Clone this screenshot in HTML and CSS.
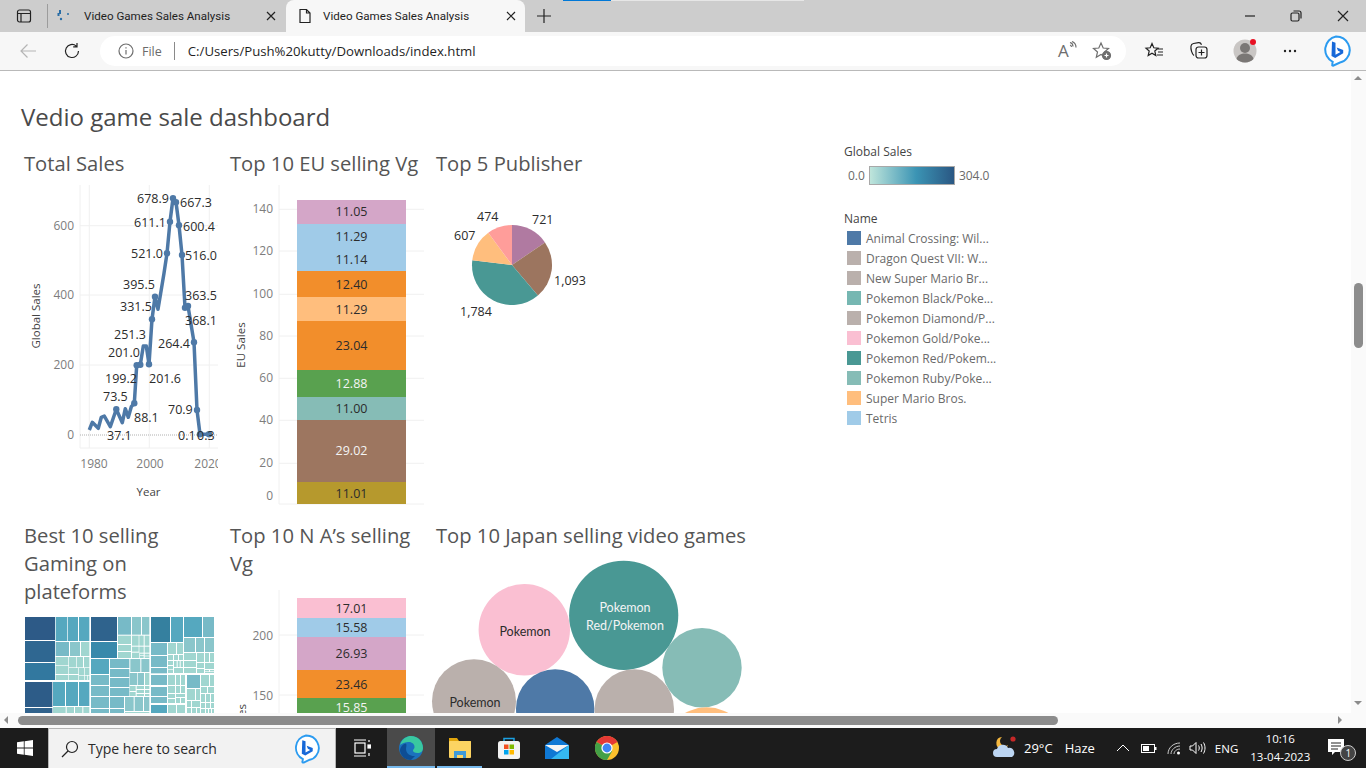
FILE: index.html
```html
<!DOCTYPE html>
<html lang="en">
<head>
    <meta charset="UTF-8">
    <title>Video Games Sales Analysis</title>
    <link rel="stylesheet" href="styles.css">
</head>
<body>
    <div class="tabbar">
        <div class="top-strip"></div>
        <div class="tab-actions">
            <svg width="16" height="16" viewBox="0 0 16 16" class="dark-line"><rect x="1.5" y="2" width="13" height="12" rx="2"/><path d="M1.5 5.5h13M5 5.5V14" /></svg>
        </div>
        <div class="tab">
            <svg width="16" height="16" viewBox="0 0 16 16"><g fill="#2a6ea6"><rect x="3" y="2" width="2" height="4"/><rect x="1.5" y="5" width="2" height="3"/><circle cx="5" cy="11" r="1.2"/><circle cx="12" cy="6" r="1"/></g></svg>
            <span class="tab-title">Video Games Sales Analysis</span>
            <svg width="10" height="10" viewBox="0 0 10 10" class="dark-line"><path d="M1 1l8 8M9 1l-8 8"/></svg>
        </div>
        <div class="tab active">
            <svg width="16" height="16" viewBox="0 0 16 16" class="dark-line"><path d="M3 1.5h6.5l3.5 3.5v9.5H3zM9.5 1.5V5H13"/></svg>
            <span class="tab-title">Video Games Sales Analysis</span>
            <svg width="10" height="10" viewBox="0 0 10 10" class="dark-line"><path d="M1 1l8 8M9 1l-8 8"/></svg>
        </div>
        <div class="new-tab">
            <svg width="16" height="16" viewBox="0 0 16 16" class="dark-line"><path d="M8 1v14M1 8h14"/></svg>
        </div>
        <div class="window-btns">
            <div class="win-btn"><svg width="12" height="12" viewBox="0 0 12 12" class="dark-line"><path d="M1 6h10"/></svg></div>
            <div class="win-btn"><svg width="12" height="12" viewBox="0 0 12 12" class="dark-line"><rect x="1" y="3" width="8" height="8" rx="1.5"/><path d="M3.5 1h5.5a2 2 0 0 1 2 2v5.5"/></svg></div>
            <div class="win-btn"><svg width="12" height="12" viewBox="0 0 12 12" class="dark-line"><path d="M1 1l10 10M11 1L1 11"/></svg></div>
        </div>
    </div>

    <div class="toolbar">
        <div class="nav-btn"><svg width="18" height="18" viewBox="0 0 18 18" class="faint-line"><path d="M17 9H2M8.5 2.5L2 9l6.5 6.5"/></svg></div>
        <div class="nav-btn"><svg width="18" height="18" viewBox="0 0 18 18" class="dark-line"><path d="M15.5 9a6.500 6.500 0 1 1-2.200-4.900M14 1v3.800h-3.800"/></svg></div>
        <div class="address">
            <svg width="16" height="16" viewBox="0 0 16 16" class="gray-line"><circle cx="8" cy="8" r="7"/><path d="M8 7v4.5M8 4.200v1.300"/></svg>
            <span class="file-label">File</span>
            <span class="addr-sep"></span>
            <span class="url">C:/Users/Push%20kutty/Downloads/index.html</span>
            <span class="read-aloud">A<svg width="8" height="10" viewBox="0 0 8 10" class="gray-line"><path d="M1 1.500c2 .5 3 2 3 4M1 4c1 .3 1.500 1 1.500 2M3 .5c2.500 1 4 3 4 6"/></svg></span>
            <svg width="20" height="20" viewBox="0 0 20 20" class="gray-line"><path d="M9 2l2.200 5 5.300.5-4 3.500 1.200 5.300L9 13.500l-4.700 2.800L5.500 11l-4-3.500L6.800 7z"/><circle cx="14.500" cy="14.500" r="4" fill="#6e6e6e"/><path d="M14.500 12.500v4M12.500 14.500h4" stroke="#fff"/></svg>
        </div>
        <div class="action-btn"><svg width="20" height="20" viewBox="0 0 20 20" class="dark-line"><path d="M8 2.500l1.800 4.300 4.200.4-3.200 2.800 1 4.500L8 12.200 4.200 14.500l1-4.500L2 7.200l4.200-.4zM14 8h5M14 11h5M13 14h6"/></svg></div>
        <div class="action-btn"><svg width="20" height="20" viewBox="0 0 20 20" class="dark-line"><path d="M5 14.500C3 13 1.500 8 2 5c.2-1.500 1-2.200 2.500-2.500l5-.8c1.500-.2 2.500.5 3 2"/><rect x="7" y="6" width="11" height="11" rx="2.500"/><path d="M12.500 8.500v6M9.500 11.500h6"/></svg></div>
        <div class="action-btn">
            <svg width="24" height="24" viewBox="0 0 24 24"><circle cx="12" cy="12" r="11.500" fill="#c9c6c4"/><circle cx="12" cy="9" r="5" fill="#7a7775"/><path d="M3.500 20c1-4 4.500-5.500 8.500-5.500s7.500 1.500 8.500 5.500c-4 4.500-13 4.500-17 0z" fill="#7a7775"/><circle cx="20" cy="3" r="3" fill="#e81123"/></svg>
        </div>
        <div class="action-btn">
            <svg width="14" height="4" viewBox="0 0 14 4" fill="#222"><circle cx="2" cy="2" r="1.2"/><circle cx="7" cy="2" r="1.2"/><circle cx="12" cy="2" r="1.2"/></svg>
        </div>
        <div class="action-btn">
            <svg width="30" height="32" viewBox="0 0 30 32"><path d="M15 1.500a13.500 13.500 0 0 1 11 21.500c-1.500 2.300-4 4-7 4.500l-6.500 3c-1 .4-1.500-.2-1.300-1l.5-2.700A13.500 13.500 0 0 1 15 1.500z" fill="#fff" stroke="#2b9bf0" stroke-width="2"/><path d="M11 6.500l3.500 1.300v12l5-2.800-2.500-1.200-1.300-3.200 6.500 2.400v3.300l-8 4.700-3.700-2z" fill="#1768d8"/></svg>
        </div>
    </div>

    <div class="browser-body">
        <main class="page">
            <h1>Vedio game sale dashboard</h1>
            <div class="dash">
                <section class="tile">
                    <h2>Total Sales</h2>
                    <svg class="chart" width="194" height="325" viewBox="24 180 194 325">
                        <g class="grid">
                            <path d="M80 225.700H218M80 295H218M80 365H218M80 448H218M80 185V448M89.300 185V448M149.300 185V448M209.300 185V448"/>
                        </g>
                        <path d="M80 435H218" class="zero-line"/>
                        <g class="tick" text-anchor="end">
                            <text x="74" y="230">600</text>
                            <text x="74" y="299">400</text>
                            <text x="74" y="369">200</text>
                            <text x="74" y="439">0</text>
                        </g>
                        <g class="tick" text-anchor="middle">
                            <text x="94" y="468">1980</text>
                            <text x="150" y="468">2000</text>
                            <text x="208" y="468">2020</text>
                        </g>
                        <text x="148.500" y="496" class="axis-title" text-anchor="middle">Year</text>
                        <text transform="translate(40 316) rotate(-90)" class="axis-title" text-anchor="middle">Global Sales</text>
                        <polyline class="sales-line" points="89.300,430 92.300,422.300 98.300,428.300 101.300,417.300 104.300,416 110.300,426.700 116.300,409.300 122.300,422.700 125.300,408.700 128.300,417.300 131.300,406.700 134.300,403.300 136.700,365.300 140.300,364.700 143.300,346 146.300,346 149,364.300 152,319.300 155,296.700 158,309.300 164,273.300 167,253.300 170,221.700 173,198.300 176,202.300 179,225.300 182,255 185,307.700 188,306 194,342.300 197,410 200,434.300 209,434.300"/>
                        <g class="sales-dots">
                            <circle cx="116.300" cy="409.300" r="3.200"/><circle cx="134.300" cy="403.300" r="3.200"/><circle cx="136.700" cy="365.300" r="3.200"/><circle cx="140.300" cy="364.700" r="3.200"/><circle cx="149" cy="364.300" r="3.200"/><circle cx="152" cy="319.300" r="3.200"/><circle cx="155" cy="296.700" r="3.200"/><circle cx="167" cy="253.300" r="3.200"/><circle cx="170" cy="221.700" r="3.200"/><circle cx="173" cy="198.300" r="3.200"/><circle cx="176" cy="202.300" r="3.200"/><circle cx="179" cy="225.300" r="3.200"/><circle cx="182" cy="255" r="3.200"/><circle cx="185" cy="307.700" r="3.200"/><circle cx="188" cy="306" r="3.200"/><circle cx="194" cy="342.300" r="3.200"/><circle cx="197" cy="410" r="3.200"/><circle cx="200" cy="434.300" r="3.200"/><circle cx="209" cy="434.300" r="3.200"/>
                        </g>
                        <g class="mark">
                            <text x="137" y="203">678.9</text><text x="180" y="207">667.3</text>
                            <text x="134" y="227">611.1</text><text x="183" y="231">600.4</text>
                            <text x="131" y="258">521.0</text><text x="185" y="260">516.0</text>
                            <text x="123" y="289">395.5</text><text x="185" y="300">363.5</text>
                            <text x="120" y="311">331.5</text><text x="185" y="325">368.1</text>
                            <text x="114" y="339">251.3</text><text x="158" y="348">264.4</text>
                            <text x="108" y="357">201.0</text><text x="105" y="383">199.2</text>
                            <text x="149" y="383">201.6</text><text x="103" y="401">73.5</text>
                            <text x="168" y="414">70.9</text><text x="134" y="422">88.1</text>
                            <text x="107" y="440">37.1</text><text x="178" y="440">0.1</text><text x="197" y="440">0.3</text>
                        </g>
                    </svg>
                </section>

                <section class="tile">
                    <h2>Top 10 EU selling Vg</h2>
                    <svg class="chart" width="194" height="325" viewBox="230 180 194 325">
                        <g class="grid"><path d="M279 209.300H424M279 251H424M279 294.300H424M279 336H424M279 378.300H424M279 420.300H424M279 463.300H424M279 504H424M279 185V504"/></g>
                        <g class="tick" text-anchor="end">
                            <text x="273" y="213">140</text><text x="273" y="255">120</text><text x="273" y="298">100</text><text x="273" y="340">80</text>
                            <text x="273" y="382">60</text><text x="273" y="424">40</text><text x="273" y="467">20</text><text x="273" y="500">0</text>
                        </g>
                        <text transform="translate(245 345) rotate(-90)" class="axis-title" text-anchor="middle">EU Sales</text>
                        <rect x="297" y="200" width="109" height="24" fill="#d4a6c8"/>
                        <rect x="297" y="224" width="109" height="47" fill="#a0cbe8"/>
                        <rect x="297" y="271" width="109" height="26" fill="#f28e2b"/>
                        <rect x="297" y="297" width="109" height="24" fill="#ffbe7d"/>
                        <rect x="297" y="321" width="109" height="49" fill="#f28e2b"/>
                        <rect x="297" y="370" width="109" height="27" fill="#59a14f"/>
                        <rect x="297" y="397" width="109" height="23" fill="#86bcb6"/>
                        <rect x="297" y="420" width="109" height="62" fill="#9d7660"/>
                        <rect x="297" y="482" width="109" height="22" fill="#b6992d"/>
                        <g class="mark" text-anchor="middle">
                            <text x="351.500" y="216">11.05</text><text x="351.500" y="241">11.29</text><text x="351.500" y="264">11.14</text>
                            <text x="351.500" y="289">12.40</text><text x="351.500" y="314">11.29</text><text x="351.500" y="350">23.04</text>
                            <text x="351.500" y="388" class="on-dark">12.88</text><text x="351.500" y="413">11.00</text>
                            <text x="351.500" y="455" class="on-dark">29.02</text><text x="351.500" y="498">11.01</text>
                        </g>
                    </svg>
                </section>

                <section class="tile">
                    <h2>Top 5 Publisher</h2>
                    <svg class="chart" width="180" height="150" viewBox="436 180 180 150">
                        <path d="M512 265V225A40 40 0 0 1 545 242.400Z" fill="#b07aa1"/>
                        <path d="M512 265L545 242.400A40 40 0 0 1 537.900 295.500Z" fill="#9c755f"/>
                        <path d="M512 265L537.900 295.500A40 40 0 0 1 472.300 260.200Z" fill="#499894"/>
                        <path d="M512 265L472.300 260.200A40 40 0 0 1 488.300 232.800Z" fill="#ffbe7d"/>
                        <path d="M512 265L488.300 232.800A40 40 0 0 1 512 225Z" fill="#ff9d9a"/>
                        <g class="mark">
                            <text x="532" y="224">721</text><text x="477" y="221">474</text><text x="454" y="240">607</text>
                            <text x="554" y="285">1,093</text><text x="460" y="316">1,784</text>
                        </g>
                    </svg>
                </section>

                <aside class="legends">
                    <div class="legend-title">Global Sales</div>
                    <div class="ramp"><span>0.0</span><i class="ramp-bar"></i><span>304.0</span></div>
                    <div class="legend-title name-title">Name</div>
                    <ul class="legend-list">
                        <li><i class="c-blue"></i>Animal Crossing: Wil...</li>
                        <li><i class="c-gray"></i>Dragon Quest VII: W...</li>
                        <li><i class="c-gray"></i>New Super Mario Br...</li>
                        <li><i class="c-aqua"></i>Pokemon Black/Poke...</li>
                        <li><i class="c-gray"></i>Pokemon Diamond/P...</li>
                        <li><i class="c-pink"></i>Pokemon Gold/Poke...</li>
                        <li><i class="c-teal"></i>Pokemon Red/Pokem...</li>
                        <li><i class="c-sage"></i>Pokemon Ruby/Poke...</li>
                        <li><i class="c-peach"></i>Super Mario Bros.</li>
                        <li><i class="c-sky"></i>Tetris</li>
                    </ul>
                </aside>

                <section class="tile">
                    <h2>Best 10 selling Gaming on plateforms</h2>
                    <svg class="chart tree" width="189" height="97" viewBox="15 21 567 291">
                        <rect x="15" y="21" width="90" height="69" fill="#2d5a87"/><rect x="15" y="93" width="90" height="63" fill="#2f6791"/><rect x="15" y="159" width="90" height="51" fill="#32789f"/>
                        <rect x="15" y="216" width="82" height="75" fill="#2d5c88"/><rect x="15" y="294" width="82" height="20" fill="#30628c"/>
                        <rect x="213" y="21" width="78" height="72" fill="#2f638d"/><rect x="213" y="96" width="78" height="48" fill="#3889ab"/>
                        <rect x="393" y="21" width="57" height="75" fill="#35809f"/>
                        <g fill="#55a8bf">
                            <rect x="107" y="21" width="34" height="72"/><rect x="143" y="21" width="31" height="72"/><rect x="177" y="21" width="31" height="72"/>
                            <rect x="99" y="216" width="36" height="72"/><rect x="138" y="216" width="36" height="72"/><rect x="177" y="216" width="31" height="72"/>
                            <rect x="453" y="21" width="36" height="75"/><rect x="492" y="21" width="54" height="60"/><rect x="393" y="285" width="48" height="26"/><rect x="213" y="147" width="54" height="45"/>
                        </g>
                        <g fill="#77bac7">
                            <rect x="107" y="96" width="40" height="42"/><rect x="294" y="21" width="39" height="53"/><rect x="549" y="21" width="33" height="60"/>
                            <rect x="270" y="147" width="58" height="27"/><rect x="270" y="177" width="58" height="24"/><rect x="270" y="204" width="58" height="27"/><rect x="270" y="234" width="58" height="24"/>
                            <rect x="213" y="195" width="54" height="30"/><rect x="213" y="228" width="54" height="30"/><rect x="213" y="261" width="54" height="33"/><rect x="213" y="297" width="54" height="17"/>
                            <rect x="270" y="261" width="42" height="33"/><rect x="270" y="297" width="42" height="17"/>
                            <rect x="393" y="99" width="48" height="36"/><rect x="393" y="138" width="48" height="33"/><rect x="393" y="174" width="48" height="16"/>
                            <rect x="393" y="195" width="48" height="30"/><rect x="393" y="231" width="48" height="27"/><rect x="393" y="261" width="48" height="18"/><rect x="501" y="195" width="39" height="39"/>
                        </g>
                        <g fill="#8ac6cb">
                            <rect x="150" y="96" width="30" height="42"/><rect x="336" y="21" width="27" height="53"/><rect x="366" y="21" width="22" height="53"/><rect x="331" y="147" width="30" height="39"/>
                            <rect x="364" y="147" width="24" height="39"/><rect x="492" y="84" width="33" height="42"/><rect x="528" y="84" width="24" height="42"/><rect x="555" y="84" width="27" height="42"/>
                            <rect x="315" y="261" width="26" height="42"/><rect x="344" y="261" width="25" height="42"/><rect x="372" y="261" width="16" height="42"/><rect x="329" y="189" width="22" height="36"/><rect x="353" y="189" width="19" height="36"/>
                        </g>
                        <g fill="#a0d6d0">
                            <rect x="183" y="96" width="25" height="42"/><rect x="107" y="141" width="38" height="25"/><rect x="147" y="141" width="21" height="31"/><rect x="170" y="141" width="19" height="31"/><rect x="192" y="141" width="16" height="31"/>
                            <rect x="107" y="168" width="38" height="24"/><rect x="147" y="174" width="28" height="18"/><rect x="177" y="174" width="15" height="21"/><rect x="194" y="174" width="14" height="21"/>
                            <rect x="107" y="195" width="38" height="15"/><rect x="147" y="195" width="28" height="15"/><rect x="177" y="197" width="15" height="13"/><rect x="194" y="197" width="8" height="13"/><rect x="204" y="197" width="4" height="13"/>
                            <rect x="99" y="291" width="38" height="20"/><rect x="140" y="291" width="22" height="20"/><rect x="165" y="291" width="22" height="20"/><rect x="190" y="291" width="18" height="20"/>
                            <rect x="294" y="77" width="39" height="25"/><rect x="294" y="105" width="39" height="18"/><rect x="294" y="126" width="39" height="18"/><rect x="336" y="77" width="20" height="30"/><rect x="358" y="77" width="13" height="30"/><rect x="374" y="77" width="14" height="30"/>
                            <rect x="336" y="110" width="20" height="15"/><rect x="358" y="110" width="13" height="18"/><rect x="374" y="110" width="14" height="18"/><rect x="336" y="128" width="22" height="16"/><rect x="360" y="131" width="11" height="5"/><rect x="360" y="138" width="11" height="6"/><rect x="374" y="131" width="14" height="6"/><rect x="374" y="139" width="14" height="5"/>
                            <rect x="375" y="189" width="13" height="36"/><rect x="329" y="228" width="18" height="15"/><rect x="350" y="228" width="22" height="9"/><rect x="350" y="240" width="22" height="9"/><rect x="375" y="228" width="13" height="9"/><rect x="375" y="240" width="13" height="9"/><rect x="329" y="246" width="18" height="12"/><rect x="350" y="252" width="22" height="6"/><rect x="375" y="252" width="13" height="6"/><rect x="315" y="306" width="73" height="8"/>
                            <rect x="444" y="99" width="24" height="33"/><rect x="471" y="99" width="18" height="33"/><rect x="444" y="135" width="15" height="15"/><rect x="462" y="135" width="12" height="15"/><rect x="477" y="135" width="12" height="15"/>
                            <rect x="444" y="153" width="15" height="12"/><rect x="462" y="153" width="8" height="18"/><rect x="473" y="153" width="6" height="18"/><rect x="482" y="153" width="7" height="18"/><rect x="444" y="168" width="15" height="10"/><rect x="444" y="180" width="15" height="9"/><rect x="462" y="174" width="27" height="15"/>
                            <rect x="492" y="129" width="36" height="21"/><rect x="492" y="153" width="36" height="18"/><rect x="492" y="174" width="36" height="15"/><rect x="531" y="129" width="21" height="27"/><rect x="555" y="129" width="12" height="27"/><rect x="570" y="129" width="12" height="27"/>
                            <rect x="531" y="159" width="21" height="15"/><rect x="531" y="177" width="21" height="12"/><rect x="555" y="159" width="27" height="18"/><rect x="555" y="180" width="12" height="4"/><rect x="570" y="180" width="12" height="4"/><rect x="555" y="186" width="27" height="3"/>
                            <rect x="444" y="285" width="24" height="26"/><rect x="471" y="285" width="24" height="26"/><rect x="444" y="195" width="21" height="30"/><rect x="468" y="195" width="12" height="30"/><rect x="483" y="195" width="12" height="30"/>
                            <rect x="444" y="228" width="21" height="21"/><rect x="468" y="228" width="12" height="21"/><rect x="483" y="228" width="12" height="21"/><rect x="444" y="252" width="21" height="12"/><rect x="444" y="267" width="21" height="12"/><rect x="468" y="252" width="27" height="9"/><rect x="468" y="264" width="12" height="15"/><rect x="483" y="264" width="12" height="15"/>
                            <rect x="543" y="195" width="24" height="33"/><rect x="570" y="195" width="12" height="33"/><rect x="501" y="237" width="24" height="33"/><rect x="528" y="237" width="12" height="33"/><rect x="543" y="231" width="18" height="18"/><rect x="564" y="231" width="18" height="18"/>
                            <rect x="543" y="252" width="12" height="24"/><rect x="558" y="252" width="12" height="24"/><rect x="573" y="252" width="9" height="24"/><rect x="501" y="273" width="12" height="18"/><rect x="516" y="273" width="24" height="18"/><rect x="501" y="294" width="12" height="17"/><rect x="516" y="294" width="12" height="17"/><rect x="531" y="294" width="9" height="17"/>
                            <rect x="543" y="279" width="12" height="15"/><rect x="558" y="279" width="12" height="15"/><rect x="573" y="279" width="9" height="15"/><rect x="543" y="297" width="12" height="14"/><rect x="558" y="297" width="6" height="14"/><rect x="567" y="297" width="6" height="14"/><rect x="576" y="297" width="6" height="14"/>
                        </g>
                    </svg>
                </section>

                <section class="tile">
                    <h2>Top 10 N A&rsquo;s selling Vg</h2>
                    <svg class="chart na" width="194" height="140" viewBox="230 585 194 140">
                        <g class="grid"><path d="M279 635H424M279 695H424M279 590V725"/></g>
                        <g class="tick" text-anchor="end"><text x="273" y="640">200</text><text x="273" y="700">150</text></g>
                        <text transform="translate(246 704) rotate(-90)" class="axis-title" text-anchor="end">NA Sales</text>
                        <rect x="297" y="598" width="109" height="20" fill="#fabfd2"/>
                        <rect x="297" y="618" width="109" height="19" fill="#a0cbe8"/>
                        <rect x="297" y="637" width="109" height="33" fill="#d4a6c8"/>
                        <rect x="297" y="670" width="109" height="28" fill="#f28e2b"/>
                        <rect x="297" y="698" width="109" height="27" fill="#59a14f"/>
                        <g class="mark" text-anchor="middle">
                            <text x="351.500" y="613">17.01</text><text x="351.500" y="632">15.58</text><text x="351.500" y="658">26.93</text>
                            <text x="351.500" y="689">23.46</text><text x="351.500" y="712" class="on-dark">15.85</text>
                        </g>
                    </svg>
                </section>

                <section class="tile wide">
                    <h2>Top 10 Japan selling video games</h2>
                    <svg class="chart bubbles" width="330" height="170" viewBox="430 555 330 170">
                        <circle cx="702" cy="667.700" r="39.700" fill="#86bcb6"/>
                        <circle cx="706.700" cy="751.300" r="44" fill="#ffbe7d"/>
                        <circle cx="524.300" cy="629.700" r="45.700" fill="#fabfd2"/>
                        <circle cx="623.700" cy="615.300" r="54.600" fill="#499894"/>
                        <circle cx="474" cy="701.300" r="42" fill="#bab0ac"/>
                        <circle cx="555.200" cy="708.500" r="39.200" fill="#4e79a7"/>
                        <circle cx="634.300" cy="709" r="39.700" fill="#bab0ac"/>
                        <g class="mark bubble-text" text-anchor="middle">
                            <text x="525" y="636">Pokemon</text>
                            <text x="625" y="612" class="on-dark">Pokemon</text>
                            <text x="625" y="630" class="on-dark">Red/Pokemon</text>
                            <text x="475" y="707">Pokemon</text>
                        </g>
                    </svg>
                </section>
            </div>
        </main>
        <div class="vscroll">
            <i class="arrow up"></i>
            <i class="vthumb"></i>
            <i class="arrow down"></i>
        </div>
        <div class="hscroll">
            <i class="arrow left"></i>
            <i class="hthumb"></i>
            <i class="arrow right"></i>
        </div>
    </div>

    <div class="taskbar">
        <div class="start">
            <svg width="16" height="16" viewBox="0 0 16 16" fill="#fff"><path d="M0 2.300l6.800-1v6.300H0zM7.600 1.200L16 0v7.600H7.600zM0 8.400h6.800v6.300L0 13.700zM7.600 8.400H16V16l-8.400-1.200z"/></svg>
        </div>
        <div class="search">
            <svg width="18" height="18" viewBox="0 0 18 18" class="dark-line"><circle cx="11" cy="7" r="5.500"/><path d="M7 11l-6 6"/></svg>
            <span class="search-text">Type here to search</span>
            <svg width="28" height="30" viewBox="0 0 30 32"><path d="M15 1.500a13.500 13.500 0 0 1 11 21.500c-1.500 2.300-4 4-7 4.500l-6.500 3c-1 .4-1.500-.2-1.300-1l.5-2.700A13.500 13.500 0 0 1 15 1.500z" fill="#fff" stroke="#2b9bf0" stroke-width="2"/><path d="M11 6.500l3.500 1.300v12l5-2.800-2.500-1.200-1.300-3.200 6.500 2.400v3.300l-8 4.700-3.700-2z" fill="#1768d8"/></svg>
        </div>
        <div class="task taskview">
            <svg width="18" height="18" viewBox="0 0 18 18" class="white-line"><rect x="2" y="4" width="10" height="10"/><path d="M1 1h12M1 17h12"/><rect x="15" y="6" width="2.500" height="3" fill="#fff"/><path d="M16 1v2M16 14v3"/></svg>
        </div>
        <div class="task edge running">
            <svg width="24" height="24" viewBox="0 0 24 24"><circle cx="12" cy="12" r="12" fill="#1b72bd"/><path d="M1 9C3 2.500 8 0 12 0c7 0 12 5.500 12 12 0 3-2 5-5.500 5-3 0-4.500-1.200-4.500-2.500 0-1 1.200-1.500 1.500-3C16 8 12.500 5.500 9 6 5 6.500 2 8 1 9z" fill="#39c8a0"/><path d="M7 13c0 5 5 7.500 9 7l-4 4C6 24 2 20 1 15c0-4 3-7 6-7.500C8 9 7 11 7 13z" fill="#0d4d94"/></svg>
        </div>
        <div class="task explorer running">
            <svg width="24" height="22" viewBox="0 0 24 22"><path d="M1 1h8l2 3h12v5H1z" fill="#e2a60d"/><rect x="1" y="4" width="22" height="17" rx="1" fill="#fcd462"/><path d="M6 21v-7h12v7h-3v-3H9v3z" fill="#3f9ad8"/></svg>
        </div>
        <div class="task store">
            <svg width="24" height="24" viewBox="0 0 24 24"><path d="M7 6V2.500h10V6" fill="none" stroke="#1ba1e2" stroke-width="1.500"/><rect x="1" y="5" width="22" height="18" rx="2.500" fill="#f3f3f3"/><rect x="7" y="8.500" width="4.500" height="4.500" fill="#f25022"/><rect x="12.500" y="8.500" width="4.500" height="4.500" fill="#7fba00"/><rect x="7" y="14" width="4.500" height="4.500" fill="#00a4ef"/><rect x="12.500" y="14" width="4.500" height="4.500" fill="#ffb900"/></svg>
        </div>
        <div class="task mail">
            <svg width="24" height="24" viewBox="0 0 24 24"><path d="M0 9l12-8 12 8v14H0z" fill="#0f78d4"/><path d="M0 9h24L12 16z" fill="#f4f4f4"/><path d="M24 9v14H6z" fill="#35b8f1"/></svg>
        </div>
        <div class="task chrome">
            <svg width="24" height="24" viewBox="0 0 24 24"><circle cx="12" cy="12" r="12" fill="#fbc02d"/><path d="M12 12L1.600 6A12 12 0 0 1 22.400 6z" fill="#e53935"/><path d="M12 12L1.600 6A12 12 0 0 0 12 24l5.200-9z" fill="#43a047"/><circle cx="12" cy="12" r="5.600" fill="#fff"/><circle cx="12" cy="12" r="4.400" fill="#3f85f4"/></svg>
        </div>
        <div class="tray">
            <svg class="weather" width="26" height="24" viewBox="0 0 26 24"><path d="M10 1a6 6 0 1 0 6 8 5 5 0 0 1-6-8z" fill="#f4b73f"/><path d="M5 21a4 4 0 0 1 0-8 6 6 0 0 1 11-1 5 5 0 0 1 4 9z" fill="#bcd5f2"/><circle cx="21" cy="3" r="2.600" fill="#c62828"/></svg>
            <span class="temp">29&deg;C</span>
            <span class="haze">Haze</span>
            <svg class="chevron" width="14" height="8" viewBox="0 0 14 8"><path d="M1 7l6-6 6 6" fill="none" stroke="#fff"/></svg>
            <svg class="battery" width="16" height="9" viewBox="0 0 16 9"><rect x=".5" y=".5" width="13" height="8" fill="none" stroke="#fff"/><rect x="2" y="2" width="6" height="5" fill="#fff"/><rect x="14" y="3" width="1.500" height="3" fill="#fff"/></svg>
            <svg class="wifi" width="14" height="13" viewBox="0 0 14 13"><path d="M1 12C1 6 6 1 13 1M4 12c0-4 4-8 9-8M7 12c0-2.500 2.500-5 6-5" fill="none" stroke="#ccc"/><circle cx="11.500" cy="11" r="1.500" fill="#fff"/></svg>
            <svg class="speaker" width="17" height="14" viewBox="0 0 17 14"><path d="M1 5v4h2.500L7 12.500v-11L3.500 5z" fill="none" stroke="#fff"/><path d="M9.500 4.500c1 1.500 1 3.500 0 5M12 3c1.500 2.500 1.500 5.500 0 8M14.500 1.500c2 3.500 2 7.500 0 11" fill="none" stroke="#fff"/></svg>
            <span class="lang">ENG</span>
            <div class="clock"><span>10:16</span><span>13-04-2023</span></div>
            <div class="notify">
                <svg width="24" height="24" viewBox="0 0 24 24"><path d="M1 3h16v13H8l-3 3v-3H1z" fill="#fff"/><path d="M4 7h10M4 10h10M4 13h7" stroke="#222"/></svg>
                <span class="badge">1</span>
            </div>
        </div>
    </div>
</body>
</html>
```

FILE: styles.css
```css
* {
    box-sizing: border-box;
}

html, body {
    height: 100%;
}

body {
    margin: 0;
    display: flex;
    flex-direction: column;
    height: 768px;
    overflow: hidden;
    font-family: "Open Sans", "Noto Sans", sans-serif;
    background-color: #fff;
}

svg {
    display: block;
    flex: none;
}

.dark-line, .faint-line, .gray-line, .white-line {
    fill: none;
    stroke-width: 1.2;
}

.dark-line { stroke: #222; }
.faint-line { stroke: #b5b5b5; }
.gray-line { stroke: #6e6e6e; }
.white-line { stroke: #fff; }

/* browser tabs */
.tabbar {
    position: relative;
    display: flex;
    height: 32px;
    background-color: #cdcdcd;
    flex: none;
}

.top-strip {
    position: absolute;
    left: 563px;
    top: 0;
    width: 241px;
    height: 1px;
    background: linear-gradient(to right, #0078d7 48px, #e6e6e6 48px);
}

.tab-actions {
    width: 48px;
    height: 24px;
    margin-top: 4px;
    padding: 4px 0 0 16px;
    border-right: 1px solid #9c9c9c;
}

.tab {
    width: 238px;
    display: flex;
    align-items: center;
    padding: 0 10px 0 8px;
    font-family: Roboto, sans-serif;
    font-size: 11.6px;
    color: #1f1f1f;
}

.tab.active {
    width: 239px;
    padding: 0 9px 0 11px;
    background-color: #f7f7f7;
    border-radius: 8px 8px 0 0;
}

.tab-title {
    flex: 1;
    margin-left: 12px;
}

.tab.active .tab-title {
    margin-left: 10px;
}

.new-tab {
    width: 38px;
    display: flex;
    align-items: center;
    justify-content: center;
}

.window-btns {
    margin-left: auto;
    display: flex;
}

.win-btn {
    width: 46.5px;
    display: flex;
    align-items: center;
    justify-content: center;
}

/* address row */
.toolbar {
    display: flex;
    align-items: center;
    height: 39px;
    padding-left: 6px;
    background-color: #f7f7f7;
    border-bottom: 1px solid #b9b9b9;
    flex: none;
}

.nav-btn {
    width: 44px;
    display: flex;
    justify-content: center;
}

.address {
    width: 1026px;
    height: 30px;
    margin: 0 5px 0 6px;
    padding: 0 14px 0 18px;
    display: flex;
    align-items: center;
    background-color: #fff;
    border-radius: 15px;
    font-size: 13.2px;
}

.file-label {
    margin-left: 8px;
    color: #6b6b6b;
    font-size: 12.5px;
}

.addr-sep {
    width: 1px;
    height: 18px;
    margin: 0 13px 0 12px;
    background-color: #8a8a8a;
}

.url {
    flex: 1;
    color: #1f1f1f;
}

.read-aloud {
    display: flex;
    width: 34px;
    color: #6e6e6e;
    font-size: 17px;
    line-height: 20px;
}

.action-btn {
    width: 45.5px;
    display: flex;
    justify-content: center;
}

/* page area */
.browser-body {
    flex: 1;
    min-height: 0;
    display: grid;
    grid-template-columns: 1fr 15px;
    grid-template-rows: 1fr 15px;
}

.page {
    overflow: hidden;
    padding: 29px 0 0 21px;
}

h1 {
    margin: 0 0 14px;
    font-size: 24px;
    line-height: 34px;
    font-weight: 400;
    color: #4a4a4a;
}

.dash {
    display: grid;
    grid-template-columns: 206px 206px 408px auto;
    grid-template-rows: 356px auto;
    row-gap: 16px;
    margin-left: 3px;
}

.tile h2 {
    margin: 0;
    padding-top: 1px;
    max-width: 192px;
    font-size: 20.2px;
    line-height: 28px;
    font-weight: 400;
    color: #555;
}

.tile.wide h2 {
    max-width: none;
}

.chart {
    margin-top: 3px;
    overflow: hidden;
}

.chart.tree { margin: 12px 0 0 1px; }
.chart.na { margin-top: 8px; }
.chart.bubbles { margin: 6px 0 0 -6px; }

.grid path {
    fill: none;
    stroke: #f0f0f0;
    stroke-width: 1;
}

.zero-line {
    fill: none;
    stroke: #b0b0b0;
    stroke-dasharray: 1 1;
}

.tick {
    font-size: 12px;
    fill: #7d7d7d;
}

.axis-title {
    font-size: 11.5px;
    fill: #444;
}

.mark {
    font-size: 12.5px;
    fill: #2c2c2c;
}

.mark .on-dark {
    fill: #f4f4f4;
}

.bubble-text {
    font-family: Lato, sans-serif;
    font-size: 12.5px;
}

.sales-line {
    fill: none;
    stroke: #4e79a7;
    stroke-width: 3.5;
    stroke-linejoin: round;
}

.sales-dots {
    fill: #4e79a7;
}

/* legends on the right of the first row */
.legends {
    margin-top: -3px;
    color: #6a6a6a;
    font-size: 12px;
}

.legend-title {
    height: 14px;
    line-height: 14px;
    color: #444;
    font-size: 12px;
}

.name-title {
    margin-top: 27px;
}

.ramp {
    display: flex;
    align-items: center;
    gap: 4px;
    margin: 7px 0 0 4px;
}

.ramp-bar {
    width: 86px;
    height: 19px;
    border: 1px solid #a8a8a8;
    background: linear-gradient(to right, #bfe5db, #3b94b4 55%, #2a5783);
}

.legend-list {
    list-style: none;
    margin: 2px 0 0 3px;
    padding: 0;
}

.legend-list li {
    display: flex;
    align-items: center;
    height: 20px;
    white-space: nowrap;
}

.legend-list i {
    width: 14px;
    height: 14px;
    margin-right: 5px;
    flex: none;
}

.c-blue { background-color: #4e79a7; }
.c-gray { background-color: #bab0ac; }
.c-aqua { background-color: #76b7b2; }
.c-pink { background-color: #fabfd2; }
.c-teal { background-color: #499894; }
.c-sage { background-color: #86bcb6; }
.c-peach { background-color: #ffbe7d; }
.c-sky { background-color: #a0cbe8; }

/* scrollbars */
.vscroll {
    position: relative;
    grid-row: 1 / 3;
    grid-column: 2;
    background-color: #fafafa;
}

.hscroll {
    position: relative;
    grid-row: 2;
    grid-column: 1;
    background-color: #fafafa;
}

.vthumb {
    position: absolute;
    left: 3px;
    top: 212px;
    width: 9px;
    height: 65px;
    border-radius: 5px;
    background-color: #8c8c8c;
}

.hthumb {
    position: absolute;
    left: 18px;
    top: 3px;
    width: 1040px;
    height: 9px;
    border-radius: 5px;
    background-color: #8c8c8c;
}

.arrow {
    position: absolute;
    width: 0;
    height: 0;
    border: 4.5px solid transparent;
}

.arrow.up { left: 3px; top: 5px; border-bottom-color: #8c8c8c; border-top-width: 0; }
.arrow.down { left: 3px; top: 630px; border-top-color: #8c8c8c; border-bottom-width: 0; }
.arrow.left { left: 4px; top: 3px; border-right-color: #8c8c8c; border-left-width: 0; }
.arrow.right { left: 1338px; top: 3px; border-left-color: #8c8c8c; border-right-width: 0; }

/* windows taskbar */
.taskbar {
    display: flex;
    align-items: center;
    height: 40px;
    flex: none;
    background-color: #1c1c1c;
    color: #fff;
}

.start {
    flex: none;
    width: 48px;
    padding-left: 17px;
}

.search {
    flex: none;
    width: 288px;
    height: 40px;
    display: flex;
    align-items: center;
    padding: 0 15px 0 12px;
    background-color: #f2f2f2;
    border: 1px solid #b5b5b5;
    border-bottom: none;
    color: #2b2b2b;
    font-size: 14px;
}

.search-text {
    flex: 1;
    margin-left: 9px;
}

.task {
    position: relative;
    flex: none;
    height: 40px;
    display: flex;
    align-items: center;
    justify-content: center;
}

.taskview { width: 51px; }
.edge { width: 48px; background-color: #4a4a4a; }
.explorer { width: 49px; }
.store { width: 49px; }
.mail { width: 48px; }
.chrome { width: 52px; }

.running::after {
    content: "";
    position: absolute;
    left: 2px;
    right: 2px;
    bottom: 0;
    height: 2px;
    background-color: #76b9ed;
}

.edge.running::after {
    left: 0;
    right: 0;
}

.tray {
    flex: 1;
    display: flex;
    align-items: center;
    height: 40px;
}

.weather { margin-left: 359px; }
.temp { margin-left: 6px; font-size: 13px; }
.haze { margin-left: 12px; font-size: 13px; }
.chevron { margin-left: 21px; }
.battery { margin-left: 11px; }
.wifi { margin-left: 10px; }
.speaker { margin-left: 8px; }
.lang { margin-left: 9px; font-size: 11.5px; }

.clock {
    width: 64px;
    margin-left: 10px;
    display: flex;
    flex-direction: column;
    align-items: center;
    font-size: 11.5px;
    line-height: 18px;
}

.notify {
    position: relative;
    margin-left: 15px;
}

.badge {
    position: absolute;
    left: 13px;
    top: 9px;
    width: 16px;
    height: 16px;
    border: 1px solid #ccc;
    border-radius: 50%;
    background-color: #444;
    font-size: 10px;
    line-height: 14px;
    text-align: center;
}
```
